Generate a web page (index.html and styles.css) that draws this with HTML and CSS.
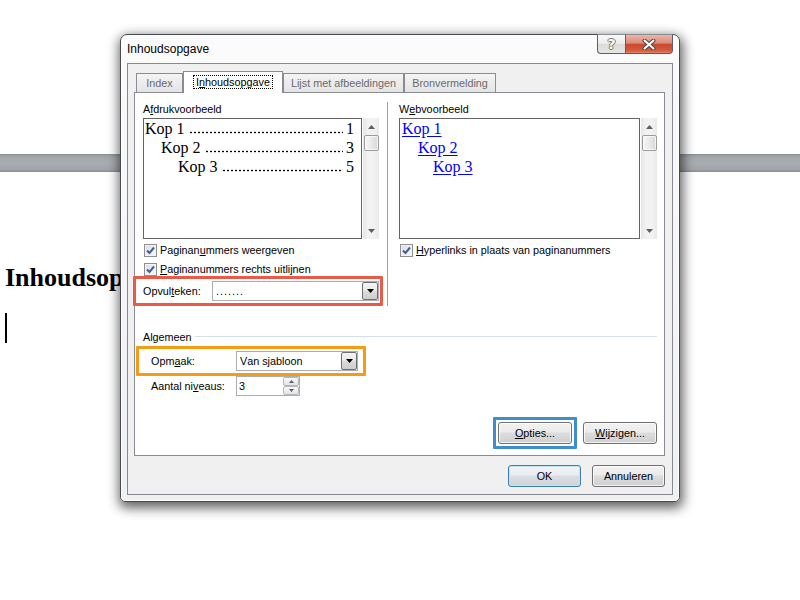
FILE: index.html
```html
<!DOCTYPE html>
<html lang="nl">
<head>
<meta charset="utf-8">
<title>Inhoudsopgave</title>
<link rel="stylesheet" href="styles.css">
</head>
<body>
<div class="doc">
  <div class="ruler-bar"></div>
  <h1 class="doc-heading">Inhoudsopgave</h1>
  <div class="caret"></div>
</div>

<div class="window" role="dialog" aria-label="Inhoudsopgave">
  <div class="titlebar">
    <span class="title">Inhoudsopgave</span>
    <div class="caption-buttons">
      <span class="cap-btn help">?</span>
      <span class="cap-btn close">
        <svg width="14" height="11" viewBox="0 0 14 11"><path d="M2.5 1.5 L11.5 9.5 M11.5 1.5 L2.5 9.5" stroke="#474747" stroke-width="4" stroke-linecap="round"/><path d="M2.5 1.5 L11.5 9.5 M11.5 1.5 L2.5 9.5" stroke="#ffffff" stroke-width="2" stroke-linecap="round"/></svg>
      </span>
    </div>
  </div>

  <div class="client">
    <div class="tabs">
      <span class="tab tab-index">Index</span>
      <span class="tab tab-toc active"><span class="focus">I<u>n</u>houdsopgave</span></span>
      <span class="tab tab-figures">Lijst met afbeeldingen</span>
      <span class="tab tab-citations">Bronvermelding</span>
    </div>

    <div class="panel">
      <div class="columns">
        <div class="col col-print">
          <div class="label">A<u>f</u>drukvoorbeeld</div>
          <div class="preview">
            <div class="preview-box">
              <div class="toc-line"><span>Kop 1</span><span class="leader"></span><span>1</span></div>
              <div class="toc-line lvl2"><span>Kop 2</span><span class="leader"></span><span>3</span></div>
              <div class="toc-line lvl3"><span>Kop 3</span><span class="leader"></span><span>5</span></div>
            </div>
            <div class="scrollbar">
              <span class="sb-arrow"><svg width="7" height="4" viewBox="0 0 7 4"><path d="M3.5 0 L7 4 L0 4 Z" fill="#5e5e5e"/></svg></span>
              <span class="sb-thumb"></span>
              <span class="sb-track"></span>
              <span class="sb-arrow"><svg width="7" height="4" viewBox="0 0 7 4"><path d="M0 0 L7 0 L3.5 4 Z" fill="#5e5e5e"/></svg></span>
            </div>
          </div>
          <div class="check first">
            <span class="box"><svg width="9" height="9" viewBox="0 0 9 9"><path d="M1 4.5 L3.5 7 L8 1.5" fill="none" stroke="#40609e" stroke-width="2"/></svg></span>
            <span>Paginan<u>u</u>mmers weergeven</span>
          </div>
          <div class="check">
            <span class="box"><svg width="9" height="9" viewBox="0 0 9 9"><path d="M1 4.5 L3.5 7 L8 1.5" fill="none" stroke="#40609e" stroke-width="2"/></svg></span>
            <span><u>P</u>aginanummers rechts uitlijnen</span>
          </div>
          <div class="hl hl-red">
            <span class="field-label">Opvul<u>t</u>eken:</span>
            <div class="combo">
              <span class="combo-value dots">.......</span>
              <span class="combo-btn"><svg width="7" height="4" viewBox="0 0 7 4"><path d="M0 0 L7 0 L3.5 4 Z" fill="#000"/></svg></span>
            </div>
          </div>
        </div>

        <div class="divider"></div>

        <div class="col col-web">
          <div class="label">W<u>e</u>bvoorbeeld</div>
          <div class="preview">
            <div class="preview-box web">
              <a class="web-link" href="#kop1">Kop 1</a>
              <a class="web-link lvl2" href="#kop2">Kop 2</a>
              <a class="web-link lvl3" href="#kop3">Kop 3</a>
            </div>
            <div class="scrollbar">
              <span class="sb-arrow"><svg width="7" height="4" viewBox="0 0 7 4"><path d="M3.5 0 L7 4 L0 4 Z" fill="#5e5e5e"/></svg></span>
              <span class="sb-thumb"></span>
              <span class="sb-track"></span>
              <span class="sb-arrow"><svg width="7" height="4" viewBox="0 0 7 4"><path d="M0 0 L7 0 L3.5 4 Z" fill="#5e5e5e"/></svg></span>
            </div>
          </div>
          <div class="check first">
            <span class="box"><svg width="9" height="9" viewBox="0 0 9 9"><path d="M1 4.5 L3.5 7 L8 1.5" fill="none" stroke="#40609e" stroke-width="2"/></svg></span>
            <span><u>H</u>yperlinks in plaats van paginanummers</span>
          </div>
        </div>
      </div>

      <div class="group-head"><span>Algemeen</span><span class="group-line"></span></div>

      <div class="hl hl-orange">
        <span class="field-label">Opm<u>a</u>ak:</span>
        <div class="combo">
          <span class="combo-value">Van sjabloon</span>
          <span class="combo-btn"><svg width="7" height="4" viewBox="0 0 7 4"><path d="M0 0 L7 0 L3.5 4 Z" fill="#000"/></svg></span>
        </div>
      </div>

      <div class="spin-row">
        <span class="field-label">Aantal ni<u>v</u>eaus:</span>
        <div class="spin">
          <span class="spin-value">3</span>
          <span class="spin-btns">
            <span class="spin-btn"><svg width="5" height="3" viewBox="0 0 5 3"><path d="M2.5 0 L5 3 L0 3 Z" fill="#4d6185"/></svg></span>
            <span class="spin-btn"><svg width="5" height="3" viewBox="0 0 5 3"><path d="M0 0 L5 0 L2.5 3 Z" fill="#4d6185"/></svg></span>
          </span>
        </div>
      </div>

      <div class="panel-buttons">
        <div class="hl hl-blue"><button class="btn" type="button"><u>O</u>pties...</button></div>
        <button class="btn" type="button"><u>W</u>ijzigen...</button>
      </div>
    </div>

    <div class="dialog-buttons">
      <button class="btn btn-default" type="button">OK</button>
      <button class="btn" type="button">Annuleren</button>
    </div>
  </div>
</div>
</body>
</html>
```

FILE: styles.css
```css
* { box-sizing: border-box; }

html, body { margin: 0; padding: 0; }

body {
  width: 800px;
  height: 600px;
  overflow: hidden;
  position: relative;
  background: #fff;
  font-family: "Liberation Sans", Arial, sans-serif;
  font-size: 11px;
  color: #000;
}

u { text-decoration: underline; text-underline-offset: 1px; }

/* document behind the dialog */
.doc { padding-top: 154px; }

.ruler-bar {
  height: 18px;
  background: linear-gradient(#8d9196 0, #a3a7ab 3px, #a9adb1 50%, #a1a5a9 85%, #898d92 100%);
}

.doc-heading {
  margin: 91px 0 0 5px;
  font: bold 26px/30px "Liberation Serif", "Times New Roman", serif;
  white-space: nowrap;
}

.caret {
  width: 2px;
  height: 30px;
  margin: 20px 0 0 5px;
  background: #000;
}

/* dialog window */
.window {
  position: absolute;
  left: 120px;
  top: 34px;
  width: 560px;
  height: 468px;
  display: flex;
  flex-direction: column;
  padding: 0 6px 6px;
  border: 1px solid #474a4f;
  border-radius: 7px 7px 5px 5px;
  background: linear-gradient(#fbfbfc, #eff0f2);
  box-shadow: 1px 4px 12px 2px rgba(0, 0, 0, 0.62), inset 0 0 0 1px #ffffff;
  font-size: 10.8px;
  font-kerning: none;
}

.titlebar {
  height: 28px;
  display: flex;
}

.title {
  flex: 1;
  align-self: center;
  margin-top: -1px;
  font-size: 12px;
}

.caption-buttons {
  display: flex;
  height: 20px;
  margin-top: -1px;
}

.cap-btn {
  height: 20px;
  display: flex;
  align-items: center;
  justify-content: center;
  border: 1px solid #5b6068;
  border-top-color: #8a8e94;
}

.help {
  width: 28px;
  border-right: none;
  border-radius: 0 0 0 4px;
  background: linear-gradient(#f9f9f9, #ebebeb 48%, #dadada 52%, #e6e6e6);
  color: #f8f8f8;
  font: bold 14px/1 "DejaVu Sans", sans-serif;
  text-shadow: 1px 0 #7a7a7a, -1px 0 #7a7a7a, 0 1px #7a7a7a, 0 -1px #7a7a7a;
}

.close {
  width: 48px;
  border-radius: 0 0 4px 0;
  background: linear-gradient(#ecb5a8, #de8b79 45%, #c94a30 52%, #d35a3e 85%, #e28165);
}

.client {
  flex: 1;
  display: flex;
  flex-direction: column;
  padding: 7px 7px 7px 6px;
  border: 1px solid #868a90;
  background: #f0f0f0;
}

/* tab strip */
.tabs {
  display: flex;
  align-items: flex-end;
  height: 22px;
  padding-left: 2px;
  margin-bottom: -1px;
  position: relative;
  z-index: 1;
}

.tab {
  height: 19px;
  margin-bottom: 1px;
  display: flex;
  align-items: center;
  justify-content: center;
  padding-bottom: 1px;
  border: 1px solid #898c95;
  border-bottom: none;
  background: linear-gradient(#f4f4f4, #e4e4e4);
  color: #6a6a6a;
  white-space: nowrap;
}

.tab-index { width: 47px; }
.tab-toc { width: 100px; }
.tab-figures { width: 121px; }
.tab-citations { width: 92px; }

.tab.active {
  height: 22px;
  margin-bottom: 0;
  padding-bottom: 2px;
  background: #fff;
  color: #000;
}

.focus {
  border: 1px dotted #000;
  padding: 0 2px;
  line-height: 12px;
}

.panel {
  border: 1px solid #898c95;
  background: #fff;
  padding: 9px 7px 6px 8px;
}

/* preview columns */
.columns {
  display: flex;
  padding-bottom: 19px;
}

.col-print { width: 240px; }

.divider {
  width: 1px;
  margin-left: 4px;
  background: #a0a0a0;
}

.col-web {
  width: 258px;
  margin-left: 11px;
}

.label {
  height: 14px;
  line-height: 14px;
  margin-bottom: 2px;
  white-space: nowrap;
}

.preview {
  display: flex;
  height: 121px;
}

.col-print .preview { width: 236px; }

.preview-box {
  flex: 1;
  overflow: hidden;
  padding: 0 7px 0 1px;
  border: 1px solid #646464;
  background: #fff;
  font: 16px/19px "Liberation Serif", "Times New Roman", serif;
}

.preview-box.web { padding-left: 2px; }

.toc-line {
  display: flex;
  white-space: nowrap;
}

/* tab leader: a row of dots on the baseline */
.leader {
  flex: 1;
  height: 19px;
  margin: 0 3px 0 4px;
  background-image: radial-gradient(circle, #000 0.7px, rgba(0, 0, 0, 0) 1.2px);
  background-size: 4px 3px;
  background-repeat: repeat-x;
  background-position: 0 12px;
}

.lvl2 { padding-left: 16px; }
.lvl3 { padding-left: 33px; }

.web-link {
  display: block;
  width: max-content;
  color: #0000ff;
  text-decoration: underline;
  text-underline-offset: 2px;
}

.web-link.lvl2 { padding-left: 0; margin-left: 16px; }
.web-link.lvl3 { padding-left: 0; margin-left: 31px; }

.scrollbar {
  width: 16px;
  margin-left: 1px;
  display: flex;
  flex-direction: column;
  align-items: center;
  background: linear-gradient(to right, #e6e6e6, #f2f2f2 30%, #f2f2f2 70%, #e9e9e9);
}

.sb-arrow {
  height: 17px;
  width: 100%;
  display: flex;
  align-items: center;
  justify-content: center;
}

.sb-thumb {
  width: 15px;
  height: 16px;
  border: 1px solid #9c9c9c;
  border-radius: 2px;
  background: linear-gradient(to right, #f7f7f7, #e9e9e9 50%, #d9d9d9);
  box-shadow: inset 0 0 0 1px rgba(255, 255, 255, 0.7);
}

.sb-track { flex: 1; }

/* checkboxes */
.check {
  display: flex;
  align-items: center;
  height: 14px;
  line-height: 14px;
  margin-top: 5px;
  white-space: nowrap;
}

.check.first { margin-top: 4px; }

.check .box {
  width: 13px;
  height: 13px;
  margin: 0 3px 0 1px;
  display: flex;
  align-items: center;
  justify-content: center;
  border: 1px solid #8e8f8f;
  background: linear-gradient(135deg, #d6d9de, #f4f4f4 70%);
  box-shadow: inset 0 0 0 1px #f4f4f4;
}

/* highlighted field groups */
.hl {
  border: 3px solid;
  border-radius: 1px;
}

.hl-red {
  width: 250px;
  margin-left: -10px;
  padding: 2px 1px 2px 7px;
  display: flex;
  align-items: center;
  border-color: #e95a48;
}

.hl-red .field-label { width: 69px; }

.hl-orange {
  width: 230px;
  margin: 2px 0 0 -7px;
  padding: 2px 5px 2px 12px;
  display: flex;
  align-items: center;
  border-color: #f59c14;
}

.hl-orange .field-label { width: 85px; }

.hl-blue {
  padding: 2px;
  border-color: #3d8ecf;
}

.field-label { white-space: nowrap; }

.combo {
  flex: 1;
  height: 20px;
  display: flex;
  align-items: center;
  padding-left: 3px;
  border: 1px solid #abadb3;
  background: #fff;
}

.combo-value { flex: 1; white-space: nowrap; }

.combo-value.dots { letter-spacing: 1px; }

.combo-btn {
  width: 16px;
  height: 18px;
  display: flex;
  align-items: center;
  justify-content: center;
  border: 1px solid #707070;
  border-radius: 2px;
  background: linear-gradient(#f3f3f3, #ebebeb 45%, #dcdcdc 50%, #cdcdcd);
}

/* general section */
.group-head {
  display: flex;
  align-items: center;
  height: 14px;
  margin-top: 5px;
}

.group-line {
  flex: 1;
  height: 1px;
  margin: -1px 0 0 3px;
  background: #d5dfe5;
}

.spin-row {
  display: flex;
  align-items: center;
  height: 20px;
  padding-left: 8px;
}

.spin-row .field-label { width: 85px; }

.spin {
  width: 64px;
  height: 20px;
  display: flex;
  border: 1px solid #abadb3;
  background: #fff;
}

.spin-value {
  flex: 1;
  padding-left: 2px;
  line-height: 18px;
}

.spin-btns {
  width: 16px;
  display: flex;
  flex-direction: column;
}

.spin-btn {
  flex: 1;
  display: flex;
  align-items: center;
  justify-content: center;
  border: 1px solid #b8b8b8;
  border-radius: 2px;
  background: linear-gradient(#f8f8f8, #e4e4e4);
}

/* buttons */
.panel-buttons {
  display: flex;
  justify-content: flex-end;
  align-items: center;
  margin-top: 21px;
}

.panel-buttons > .btn { margin-left: 6px; }

.btn {
  width: 74px;
  height: 22px;
  padding: 0;
  border: 1px solid #707070;
  border-radius: 3px;
  background: linear-gradient(#f2f2f2, #ebebeb 45%, #dddddd 50%, #cfcfcf);
  box-shadow: inset 0 0 0 1px rgba(255, 255, 255, 0.75);
  font: 10.8px "Liberation Sans", Arial, sans-serif;
  font-kerning: none;
  color: #000;
}

.dialog-buttons {
  display: flex;
  justify-content: flex-end;
  gap: 11px;
  margin-top: 9px;
}

.dialog-buttons .btn { width: 73px; }

.btn-default {
  border-color: #3c7fb1;
  box-shadow: inset 0 0 0 1px #bfe3f7;
  background: linear-gradient(#f2f4f6, #eaedf0 45%, #dbdfe3 50%, #ced3d8);
}
```
